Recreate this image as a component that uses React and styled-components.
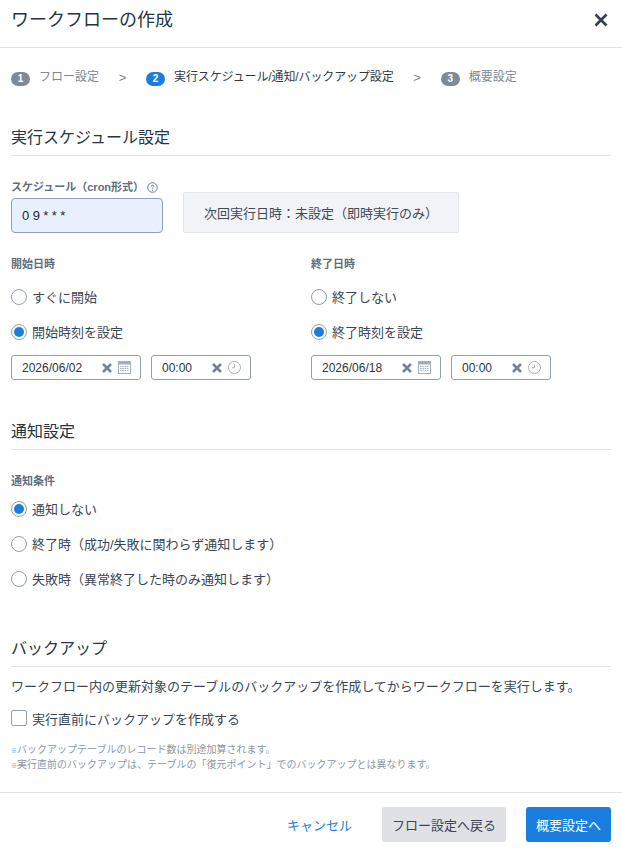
import React from "react";
import styled, { createGlobalStyle } from "styled-components";

const GlobalStyle = createGlobalStyle`
  html, body { margin: 0; padding: 0; background: #fff; }
  body {
    font-family: "Liberation Sans", "Noto Sans CJK JP", sans-serif;
    color: #2f3b48;
  }
`
const Dialog = styled.div`
  width: 622px;
  height: 851px;
  overflow: hidden;
  display: flex;
  flex-direction: column;
`
const Header = styled.header`
  height: 39px;
  padding: 0 13px 8px 11px;
  display: flex;
  align-items: center;
  justify-content: space-between;
  border-bottom: 1px solid #e2e4e8;
`
const Title = styled.h1`
  margin: 0;
  font-size: 18px;
  line-height: 24px;
  font-weight: 400;
  color: #253545;
`
const CloseButton = styled.button`
  border: 0;
  padding: 0;
  background: none;
  display: flex;
  svg { display: block; }
`
const Steps = styled.div`
  display: flex;
  align-items: center;
  padding: 20px 11px 0;
  height: 18px;
`
const Step = styled.div`
  display: flex;
  align-items: flex-start;
  font-size: 12px;
  line-height: 18px;
  letter-spacing: ${p => (p.$active ? "-0.11px" : "0")};
  color: ${p => (p.$active ? "#2f3b48" : "#7c8894")};
`
const StepBadge = styled.span`
  width: 19px;
  height: 14px;
  margin: 4px 9px 0 0;
  border-radius: 7px;
  background: ${p => (p.$active ? "#1a7fdc" : "#7d8a97")};
  color: #fff;
  font-size: 10px;
  font-weight: 700;
  line-height: 14px;
  text-align: center;
`
const StepArrow = styled.span`
  width: 47px;
  text-align: center;
  font-size: 13px;
  color: #77838f;
`
const Body = styled.main`
  flex: 1;
  padding: 0 11px;
`
const Section = styled.section`
  margin-top: ${p => p.$top}px;
`
const SectionTitle = styled.h2`
  margin: 0;
  height: 24px;
  padding-bottom: 5px;
  font-size: 16px;
  line-height: 24px;
  font-weight: 400;
  color: #253545;
  border-bottom: 1px solid #e2e4e8;
`
const ScheduleRow = styled.div`
  display: flex;
  align-items: flex-end;
  gap: 20px;
  margin-top: 24px;
`
const FieldLabel = styled.div`
  display: flex;
  align-items: center;
  gap: 3px;
  margin-top: ${p => p.$top || 0}px;
  font-size: 11px;
  line-height: 14px;
  font-weight: 700;
  color: #5f6e7c;
  svg { margin-top: 1px; }
`
const CronInput = styled.div`
  box-sizing: border-box;
  width: 152px;
  height: 35px;
  margin-top: 4px;
  padding-left: 10px;
  display: flex;
  align-items: center;
  font-size: 13px;
  letter-spacing: 0.4px;
  word-spacing: -1px;
  color: #1f2933;
  background: #e8f0fd;
  border: 1px solid #8fa1b3;
  border-radius: 4px;
`
const NextRun = styled.div`
  box-sizing: border-box;
  width: 276px;
  height: 41px;
  padding-left: 20px;
  display: flex;
  align-items: center;
  font-size: 13px;
  background: #f1f3f7;
  border: 1px solid #e3e6ea;
  border-radius: 2px;
  color: #3d4a57;
`
const DateColumns = styled.div`
  display: grid;
  grid-template-columns: 300px 300px;
  margin-top: 24px;
`
const RadioRow = styled.label`
  display: flex;
  align-items: center;
  gap: 5px;
  height: 35px;
  font-size: 13px;
  color: #3a4653;
`
const RadioGroup = styled.div`
  margin-top: ${p => p.$top}px;
`
const RadioDot = styled.span`
  box-sizing: border-box;
  width: 16px;
  height: 16px;
  border-radius: 50%;
  background: #fff;
  border: 1px solid #93a1af;
  display: flex;
  align-items: center;
  justify-content: center;
  &::after {
    content: "";
    display: ${p => (p.$checked ? "block" : "none")};
    width: 10px;
    height: 10px;
    border-radius: 50%;
    background: #1a7fdc;
  }
`
const PickerRow = styled.div`
  display: flex;
  gap: 10px;
  margin-top: 6px;
`
const Picker = styled.div`
  box-sizing: border-box;
  width: ${p => p.$width}px;
  height: 25px;
  padding: 0 9px 0 10px;
  display: flex;
  align-items: center;
  border: 1px solid #93a1af;
  border-radius: 3px;
  font-size: 12px;
  color: #2b3641;
`
const PickerValue = styled.span`
  flex: 1;
`
const PickerIcons = styled.span`
  display: flex;
  align-items: center;
  gap: 6px;
  svg { display: block; }
`
const Description = styled.p`
  margin: 10px 0 0;
  font-size: 13px;
  line-height: 20px;
  color: #3a4653;
`
const CheckRow = styled.label`
  display: flex;
  align-items: center;
  gap: 5px;
  margin-top: 11px;
  height: 20px;
  font-size: 13px;
  color: #3a4653;
`
const CheckBox = styled.span`
  box-sizing: border-box;
  width: 16px;
  height: 16px;
  border: 1px solid #93a1af;
  border-radius: 2px;
`
const Notes = styled.div`
  margin-top: 14px;
  font-size: 10px;
  line-height: 15px;
  color: #8c97a3;
`
const NoteMark = styled.span`
  font-size: 6px;
  font-weight: 700;
  line-height: 0;
  color: #76838f;
`
const Footer = styled.footer`
  box-sizing: border-box;
  height: 59px;
  padding: 14px 11px 0;
  display: flex;
  justify-content: flex-end;
  align-items: flex-start;
  border-top: 1px solid #e2e4e8;
`
const LinkButton = styled.button`
  border: 0;
  background: none;
  padding: 0;
  height: 35px;
  margin-right: 30px;
  font: inherit;
  font-size: 13px;
  color: #1a7fdc;
`
const Button = styled.button`
  border: 0;
  height: 35px;
  width: ${p => p.$width}px;
  margin-left: ${p => p.$gap || 0}px;
  padding: 0;
  border-radius: 3px;
  font: inherit;
  font-size: 13px;
  color: ${p => (p.$primary ? "#fff" : "#3a4653")};
  background: ${p => (p.$primary ? "#1a7fdc" : "#dfe1e5")};
`

const CloseIcon = () => (
  <svg width="16" height="16" viewBox="0 0 16 16">
    <path d="M2.500 2.500l11 11M13.500 2.500l-11 11" stroke="#2f4254" strokeWidth="2.600" />
  </svg>
)
const HelpIcon = () => (
  <svg width="11" height="11" viewBox="0 0 12 12" fill="none">
    <circle cx="6" cy="6" r="5.200" stroke="#5f6e7c" />
    <path d="M4.500 4.800C4.500 3 7.500 3 7.500 4.800 7.500 6 6 5.800 6 7.200" stroke="#5f6e7c" />
    <circle cx="6" cy="8.800" r=".7" fill="#5f6e7c" />
  </svg>
)
const ClearIcon = () => (
  <svg width="10" height="10" viewBox="0 0 10 10">
    <path d="M1 1l8 8M9 1l-8 8" stroke="#748392" strokeWidth="2.500" />
  </svg>
)
const CalendarIcon = () => (
  <svg width="13" height="13" viewBox="0 0 13 13" fill="none">
    <rect x=".5" y=".5" width="12" height="12" stroke="#a3aeb9" />
    <rect x="1" y="1" width="11" height="2.500" fill="#a3aeb9" />
    <path d="M2 5.500h9M2 7.500h9M2 9.500h9" stroke="#a3aeb9" strokeDasharray="1.500 .8" />
  </svg>
)
const ClockIcon = () => (
  <svg width="13" height="13" viewBox="0 0 13 13" fill="none">
    <circle cx="6.500" cy="6.500" r="6" stroke="#a3aeb9" />
    <path d="M6.500 3.500v3.300h-2.500" stroke="#a3aeb9" />
  </svg>
)

const Radio = ({ checked, children }) => (
  <RadioRow>
    <RadioDot $checked={checked} />
    {children}
  </RadioRow>
)

const DateTime = ({ date }) => (
  <PickerRow>
    <Picker $width={130}>
      <PickerValue>{date}</PickerValue>
      <PickerIcons><ClearIcon /><CalendarIcon /></PickerIcons>
    </Picker>
    <Picker $width={100}>
      <PickerValue>00:00</PickerValue>
      <PickerIcons><ClearIcon /><ClockIcon /></PickerIcons>
    </Picker>
  </PickerRow>
)

export default function App() {
  return (
    <React.Fragment>
      <GlobalStyle />
      <Dialog>
        <Header>
          <Title>ワークフローの作成</Title>
          <CloseButton><CloseIcon /></CloseButton>
        </Header>
        <Steps>
          <Step><StepBadge>1</StepBadge>フロー設定</Step>
          <StepArrow>&gt;</StepArrow>
          <Step $active><StepBadge $active>2</StepBadge>実行スケジュール/通知/バックアップ設定</Step>
          <StepArrow>&gt;</StepArrow>
          <Step><StepBadge>3</StepBadge>概要設定</Step>
        </Steps>
        <Body>
          <Section $top={40}>
            <SectionTitle>実行スケジュール設定</SectionTitle>
            <ScheduleRow>
              <div>
                <FieldLabel>スケジュール（cron形式）<HelpIcon /></FieldLabel>
                <CronInput>0 9 * * *</CronInput>
              </div>
              <NextRun>次回実行日時：未設定（即時実行のみ）</NextRun>
            </ScheduleRow>
            <DateColumns>
              <div>
                <FieldLabel>開始日時</FieldLabel>
                <RadioGroup $top={8}>
                  <Radio>すぐに開始</Radio>
                  <Radio checked>開始時刻を設定</Radio>
                </RadioGroup>
                <DateTime date="2026/06/02" />
              </div>
              <div>
                <FieldLabel>終了日時</FieldLabel>
                <RadioGroup $top={8}>
                  <Radio>終了しない</Radio>
                  <Radio checked>終了時刻を設定</Radio>
                </RadioGroup>
                <DateTime date="2026/06/18" />
              </div>
            </DateColumns>
          </Section>
          <Section $top={40}>
            <SectionTitle>通知設定</SectionTitle>
            <FieldLabel $top={24}>通知条件</FieldLabel>
            <RadioGroup $top={3}>
              <Radio checked>通知しない</Radio>
              <Radio>終了時（成功/失敗に関わらず通知します）</Radio>
              <Radio>失敗時（異常終了した時のみ通知します）</Radio>
            </RadioGroup>
          </Section>
          <Section $top={41}>
            <SectionTitle>バックアップ</SectionTitle>
            <Description>ワークフロー内の更新対象のテーブルのバックアップを作成してからワークフローを実行します。</Description>
            <CheckRow><CheckBox />実行直前にバックアップを作成する</CheckRow>
            <Notes>
              <NoteMark>※</NoteMark>バックアップテーブルのレコード数は別途加算されます。<br />
              <NoteMark>※</NoteMark>実行直前のバックアップは、テーブルの「復元ポイント」でのバックアップとは異なります。
            </Notes>
          </Section>
        </Body>
        <Footer>
          <LinkButton>キャンセル</LinkButton>
          <Button $width={124}>フロー設定へ戻る</Button>
          <Button $width={85} $gap={20} $primary>概要設定へ</Button>
        </Footer>
      </Dialog>
    </React.Fragment>
  )
}
